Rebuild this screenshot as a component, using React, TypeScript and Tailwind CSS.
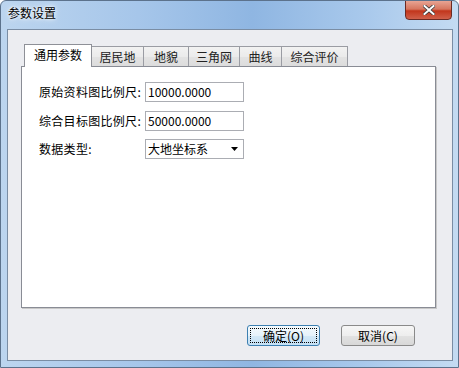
import { useState } from 'react'

const tabs = ['通用参数', '居民地', '地貌', '三角网', '曲线', '综合评价']
const tabWidths = [68, 53, 46, 52, 43, 67]

const font = { fontFamily: '"Noto Sans CJK SC", "Liberation Sans", sans-serif' }

function Field({ label, value }: { label: string; value: string }) {
  return (
    <div className="flex items-center h-[20px]">
      <span className="w-[106px] text-[12px] text-black leading-none tracking-[0.3px]">{label}</span>
      <div className="w-[99px] h-[20px] border border-[#abadb3] bg-white flex items-center px-[2px] text-[12px] text-[#000] leading-none">
        {value}
      </div>
    </div>
  )
}

export default function App() {
  const [active, setActive] = useState(0)

  return (
    <div
      className="w-[459px] h-[368px] flex flex-col rounded-t-[6px] border border-[#5c728c] bg-[linear-gradient(90deg,#bcd5ef_0%,#a6c6ea_30%,#8fb6e2_55%,#a9c9ec_80%,#c4dbf2_100%)] overflow-hidden"
      style={font}
    >
      {/* title bar */}
      <div className="h-[28px] flex items-start justify-between shrink-0">
        <span className="text-[12px] text-black mt-[6px] ml-[7px] leading-none [text-shadow:0_0_6px_#ffffff,0_0_3px_#ffffff]">参数设置</span>
        <button className="w-[47px] h-[20px] mr-[6px] -mt-px rounded-b-[4px] border border-[#6b2a23] bg-[linear-gradient(180deg,#e8a493_0%,#d6765f_45%,#c2361c_55%,#d0604a_100%)] flex items-center justify-center">
          <svg width="12" height="10" viewBox="0 0 12 10">
            <path d="M1.5 1 L10.5 9 M10.5 1 L1.5 9" stroke="#3b3b3b" strokeWidth="3.6" strokeLinecap="square" />
            <path d="M1.5 1 L10.5 9 M10.5 1 L1.5 9" stroke="#ffffff" strokeWidth="2" strokeLinecap="square" />
          </svg>
        </button>
      </div>

      {/* client area */}
      <div className="flex-1 ml-[6px] mr-[5px] mb-[6px] border border-[#7a8da4] bg-[#ecedf1] flex flex-col px-[14px] pt-[14px]">
        {/* tabs */}
        <div className="flex items-end h-[22px] pl-[2px]">
          {tabs.map((t, i) => (
            <div
              key={t}
              onClick={() => setActive(i)}
              className={
                i === active
                  ? 'h-[23px] -mb-px relative z-10 bg-white border border-[#8e9097] border-b-0 flex items-center justify-center text-[12px] text-black leading-none pb-[2px]'
                  : 'h-[20px] -ml-px first:ml-0 bg-[linear-gradient(180deg,#f2f2f2_0%,#ebebeb_50%,#e3e3e3_51%,#dcdcdc_100%)] border border-[#9a9ca3] border-b-0 flex items-center justify-center text-[12px] text-[#222] leading-none'
              }
              style={{ width: tabWidths[i] }}
            >
              {t}
            </div>
          ))}
        </div>

        {/* panel */}
        <div className="w-[415px] h-[242px] -ml-px bg-white border border-[#898c95] shadow-[1px_1px_0_#c8c8c8] flex flex-col gap-[9px] pt-[15px] pl-[17px]">
          <Field label="原始资料图比例尺:" value="10000.0000" />
          <Field label="综合目标图比例尺:" value="50000.0000" />
          <div className="flex items-center h-[20px] mt-[-1px]">
            <span className="w-[106px] text-[12px] text-black leading-none tracking-[0.3px]">数据类型:</span>
            <div className="w-[99px] h-[20px] border border-[#abadb3] bg-white flex items-center justify-between pl-[2px] pr-[5px] text-[12px] text-black leading-none">
              <span>大地坐标系</span>
              <svg width="7" height="4" viewBox="0 0 7 4">
                <path d="M0 0 H7 L3.5 4 Z" fill="#000" />
              </svg>
            </div>
          </div>
        </div>

        {/* buttons */}
        <div className="flex justify-end gap-[21px] mt-[17px] pr-[23px]">
          <button className="w-[73px] h-[21px] rounded-[3px] border border-[#3c7fb1] bg-[linear-gradient(180deg,#f4fafd_0%,#e6f2fa_50%,#d4e9f7_51%,#c4e0f4_100%)] p-[2px]">
            <div className="w-full h-full border border-dotted border-black flex items-center justify-center text-[12px] text-black leading-none">
              确定(O)
            </div>
          </button>
          <button className="w-[74px] h-[21px] rounded-[3px] border border-[#8a8a8a] bg-[linear-gradient(180deg,#f6f6f6_0%,#eeeeee_50%,#e2e2e2_51%,#d8d8d8_100%)] flex items-center justify-center text-[12px] text-black leading-none">
            取消(C)
          </button>
        </div>
      </div>
    </div>
  )
}
